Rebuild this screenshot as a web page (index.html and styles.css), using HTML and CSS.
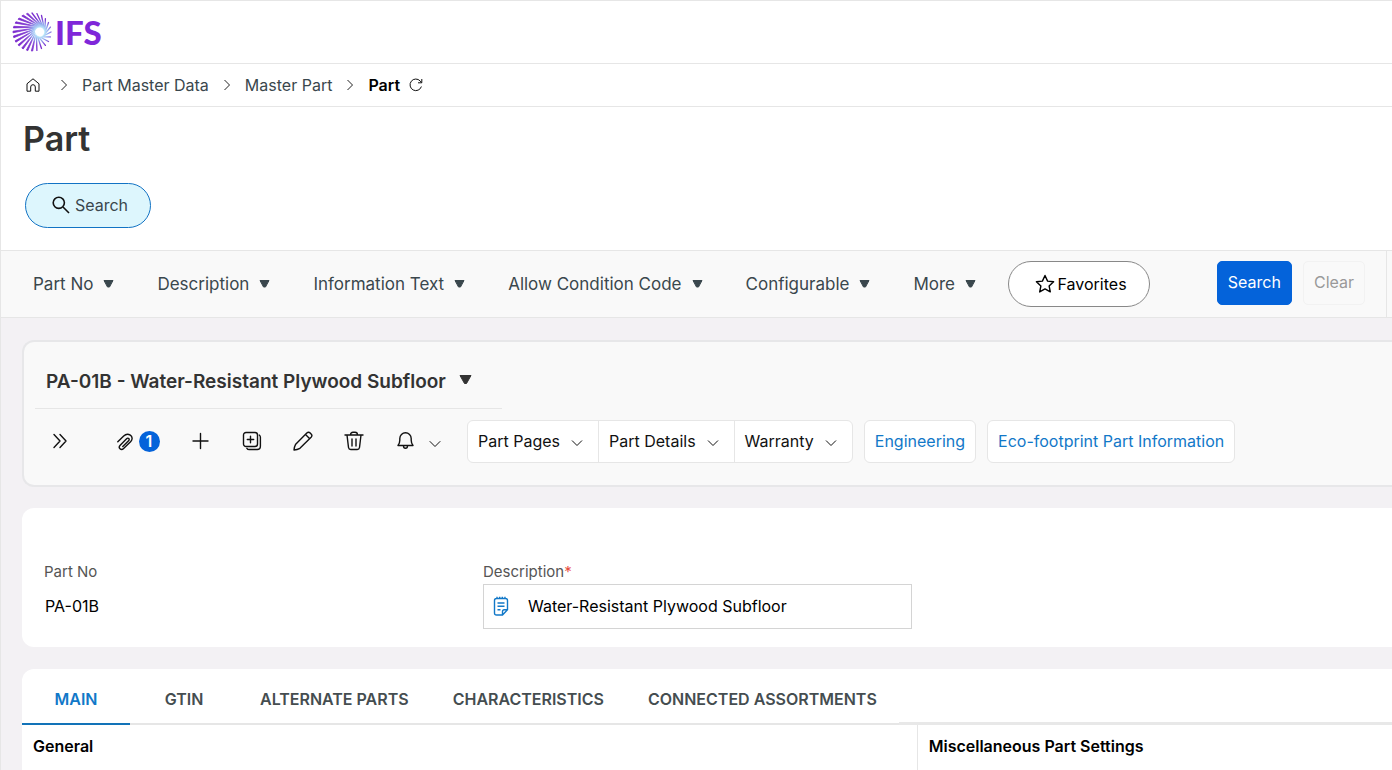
FILE: index.html
```html
<!DOCTYPE html>
<html lang="en">
<head>
    <meta charset="UTF-8">
    <meta name="viewport" content="width=device-width, initial-scale=1.0">
    <title>Part</title>
    <link rel="stylesheet" href="styles.css">
</head>
<body>
    <header class="topbar">
        <a class="logo" href="#">
            <svg width="42" height="42" viewBox="0 0 42 42" aria-hidden="true">
                <defs>
                    <radialGradient id="burst" gradientUnits="userSpaceOnUse" cx="29" cy="21" r="27">
                        <stop offset="0.15" stop-color="#c4f1fb"/>
                        <stop offset="0.3" stop-color="#8fa8ee"/>
                        <stop offset="0.5" stop-color="#8240d2"/>
                        <stop offset="1" stop-color="#7a26cc"/>
                    </radialGradient>
                    <radialGradient id="burstRight" gradientUnits="userSpaceOnUse" cx="29" cy="21" r="14">
                        <stop offset="0.3" stop-color="#c4f1fb"/>
                        <stop offset="0.6" stop-color="#8fa8ee"/>
                        <stop offset="1" stop-color="#7a30cf"/>
                    </radialGradient>
                </defs>
                <g fill="url(#burst)" stroke="url(#burst)" stroke-width="0.8" stroke-linejoin="round">
                    <path d="M20.3 40 21.7 40 24.7 23.5zM15.4 39.1 16.8 39.7 24.2 22.3zM10.8 37 12.2 38 24 21zM7 33.8 8.2 35 24.2 19.7zM4.1 29.8 4.9 31.2 24.7 18.5zM2.4 25.1 2.8 26.7 25.5 17.5zM2 20.2 2 21.8 26.5 16.7zM2.8 15.3 2.4 16.9 27.7 16.2zM4.9 10.8 4.1 12.2 29 16zM8.2 7 7 8.2 30.3 16.2zM12.2 4 10.8 5 31.5 16.7zM16.8 2.3 15.4 2.9 32.5 17.5z"/>
                </g>
                <g fill="none" stroke="url(#burstRight)" stroke-width="1.3" stroke-linecap="round">
                    <path d="M21 2 33.3 18.5M25.9 2.6 33.8 19.7M30.5 4.5 34 21M34.4 7.6 33.8 22.3M37.5 11.5 33.3 23.5M39.4 16.1 32.5 24.5M40 21 31.5 25.3M39.4 25.9 30.3 25.8M37.5 30.5 29 26M34.4 34.4 27.7 25.8M30.5 37.5 26.5 25.3M25.9 39.4 25.5 24.5"/>
                </g>
            </svg>
            <span>IFS</span>
        </a>
    </header>

    <nav class="breadcrumb" aria-label="Breadcrumb">
        <a class="home" href="#" aria-label="Home">
            <svg width="14" height="14" viewBox="0 0 14 14"><path d="M1 5.8 7 .8l6 5v7.4H9.3V9a2.3 2.3 0 0 0-4.6 0v4.2H1z"/></svg>
        </a>
        <svg class="sep" width="8" height="12" viewBox="0 0 8 12"><path d="M1.5 1 6.5 6l-5 5"/></svg>
        <a href="#">Part Master Data</a>
        <svg class="sep" width="8" height="12" viewBox="0 0 8 12"><path d="M1.5 1 6.5 6l-5 5"/></svg>
        <a href="#">Master Part</a>
        <svg class="sep" width="8" height="12" viewBox="0 0 8 12"><path d="M1.5 1 6.5 6l-5 5"/></svg>
        <strong>Part</strong>
        <button class="refresh" type="button" aria-label="Refresh">
            <svg width="14" height="14" viewBox="0 0 14 14"><path d="M12.4 8.5A5.8 5.8 0 1 1 11.2 3l1.3 1.5M12.8 1v3.8H9"/></svg>
        </button>
    </nav>

    <section class="page-title">
        <h1>Part</h1>
        <button class="pill pill-search" type="button">
            <svg width="18" height="18" viewBox="0 0 18 18"><circle cx="6.8" cy="6.8" r="5.6"/><path d="m11 11 6 6"/></svg>
            Search
        </button>
    </section>

    <section class="filters">
        <div class="filter-list">
            <button type="button">Part No <svg class="caret" width="11" height="8" viewBox="0 0 11 8"><path d="M1 .5h9L6.5 7h-2z"/></svg></button>
            <button type="button">Description <svg class="caret" width="11" height="8" viewBox="0 0 11 8"><path d="M1 .5h9L6.5 7h-2z"/></svg></button>
            <button type="button">Information Text <svg class="caret" width="11" height="8" viewBox="0 0 11 8"><path d="M1 .5h9L6.5 7h-2z"/></svg></button>
            <button type="button">Allow Condition Code <svg class="caret" width="11" height="8" viewBox="0 0 11 8"><path d="M1 .5h9L6.5 7h-2z"/></svg></button>
            <button type="button">Configurable <svg class="caret" width="11" height="8" viewBox="0 0 11 8"><path d="M1 .5h9L6.5 7h-2z"/></svg></button>
            <button type="button">More <svg class="caret" width="11" height="8" viewBox="0 0 11 8"><path d="M1 .5h9L6.5 7h-2z"/></svg></button>
        </div>
        <button class="pill pill-favorites" type="button">
            <svg width="20" height="20" viewBox="0 0 20 20"><path d="m10 1.500 2.600 5.600 6 .7-4.500 4.100 1.200 6-5.300-3-5.300 3 1.200-6L1.400 7.800l6-.7z"/></svg>
            Favorites
        </button>
        <div class="filter-actions">
            <button class="btn-search" type="button">Search</button>
            <button class="btn-clear" type="button" disabled>Clear</button>
        </div>
    </section>

    <main class="content">
        <section class="record">
            <button class="record-title" type="button">
                PA-01B - Water-Resistant Plywood Subfloor
                <svg class="caret" width="13" height="10" viewBox="0 0 13 10"><path d="M1 .5h11L7.500 8.500h-2z"/></svg>
            </button>
            <div class="toolbar">
                <button class="tool tool-expand" type="button" aria-label="Expand">
                    <svg width="16" height="16" viewBox="0 0 16 16"><path d="m2 1.500 6 6.500-6 6.500M8 1.500 14 8l-6 6.500"/></svg>
                </button>
                <button class="tool tool-attach" type="button" aria-label="Attachments">
                    <svg width="18" height="18" viewBox="0 0 18 18"><path d="M1.800 8.800 7.700 3c2-1.900 4.500-2.200 6.600-.8 2.200 1.500 2.400 4.300.5 6.200l-7.200 7.200c-1.100 1.100-2.700 1.100-3.600.2-1-1-.9-2.500.2-3.600l6.400-6.400c.8-.8 1.700-.8 2.200-.2.600.6.500 1.400-.2 2.100L6.800 13.400"/></svg>
                    <span class="badge">1</span>
                </button>
                <button class="tool" type="button" aria-label="New">
                    <svg width="18" height="18" viewBox="0 0 18 18"><path d="M8.500 1.500v15M1 9h15"/></svg>
                </button>
                <button class="tool" type="button" aria-label="Duplicate">
                    <svg width="20" height="20" viewBox="0 0 20 20"><rect x="1.500" y="1.500" width="14" height="14" rx="2.500"/><path d="M8.500 5.300v6.400M5.300 8.500h6.400M17.200 4c.8.500 1.200 1.300 1.200 2.300v9c0 2-1.300 3.200-3.200 3.200h-8c-1 0-1.800-.4-2.300-1.200"/></svg>
                </button>
                <button class="tool" type="button" aria-label="Edit">
                    <svg width="20" height="20" viewBox="0 0 20 20"><path d="M1 19c.2-2 .7-4 1.700-5.800L13.800 2.100c1-1 2.500-1 3.400-.1l.9.900c1 1 .9 2.400 0 3.400L6.900 17.300C5 18.300 3 18.800 1 19zM12.500 3.500l4 4"/></svg>
                </button>
                <button class="tool" type="button" aria-label="Delete">
                    <svg width="20" height="20" viewBox="0 0 20 20"><path d="M1 4h18M6.500 4c0-1.500 1-2.700 2.500-2.700h2c1.500 0 2.500 1.200 2.500 2.700M3 4l1.500 12.500c.2 1.300 1 2 2.200 2h6.600c1.200 0 2-.7 2.200-2L17 4M8 8v7M12 8v7"/></svg>
                </button>
                <button class="tool" type="button" aria-label="Notifications">
                    <svg width="20" height="20" viewBox="0 0 20 20"><path d="M3 14.500c1.300-1.600 1.800-3 1.800-5.200V7.500a5.700 5.700 0 0 1 11.400 0v1.800c0 2.200.5 3.600 1.800 5.200zM8.500 15c0 1.200.8 2.200 2 2.200s2-1 2-2.200"/></svg>
                </button>
                <button class="tool tool-more" type="button" aria-label="Notification options">
                    <svg width="12" height="8" viewBox="0 0 12 8"><path d="m1 1.500 5 5 5-5"/></svg>
                </button>
                <div class="menu-group">
                    <button type="button">Part Pages <svg width="12" height="8" viewBox="0 0 12 8"><path d="m1 1.500 5 5 5-5"/></svg></button>
                    <button type="button">Part Details <svg width="12" height="8" viewBox="0 0 12 8"><path d="m1 1.500 5 5 5-5"/></svg></button>
                    <button type="button">Warranty <svg width="12" height="8" viewBox="0 0 12 8"><path d="m1 1.500 5 5 5-5"/></svg></button>
                </div>
                <a class="link-btn" href="#">Engineering</a>
                <a class="link-btn" href="#">Eco-footprint Part Information</a>
            </div>
        </section>

        <form class="fields" onsubmit="return false;">
            <div class="field">
                <label for="partNo">Part No</label>
                <output id="partNo">PA-01B</output>
            </div>
            <div class="field">
                <label for="description">Description<span class="required">*</span></label>
                <div class="input-box">
                    <svg width="16" height="20" viewBox="0 0 16 20"><path d="M9.500 19H3.500C2.200 19 1.500 18.300 1.500 17V4.500c0-1.200.7-2 2-2h9c1.300 0 2 .8 2 2v9.300zM9.500 19v-3.500c0-1.200.7-1.800 1.800-1.800h3.200M4 .8v2M6.700.8v2M9.300.8v2M12 .8v2M4.500 7h7M4.500 10.300h7M4.500 13.700h3"/></svg>
                    <input type="text" id="description" name="description" value="Water-Resistant Plywood Subfloor" required>
                </div>
            </div>
        </form>

        <section class="details">
            <div class="tabs" role="tablist">
                <button class="tab active" type="button" role="tab" aria-selected="true">MAIN</button>
                <button class="tab" type="button" role="tab">GTIN</button>
                <button class="tab" type="button" role="tab">ALTERNATE PARTS</button>
                <button class="tab" type="button" role="tab">CHARACTERISTICS</button>
                <button class="tab" type="button" role="tab">CONNECTED ASSORTMENTS</button>
                <span class="tabs-rest"></span>
            </div>
            <div class="panels">
                <div class="panel"><h2>General</h2></div>
                <div class="panel"><h2>Miscellaneous Part Settings</h2></div>
            </div>
        </section>
    </main>
</body>
</html>
```
FILE: styles.css
```css
* {
    box-sizing: border-box;
}
html {
    height: 100%;
}
body {
    display: flex;
    flex-direction: column;
    min-height: 100%;
    margin: 0;
    border-top: 1px solid #e6e6e6;
    border-left: 1px solid #e6e6e6;
    background-color: #fff;
    color: #3a474d;
    font-family: Inter, "Liberation Sans", sans-serif;
    font-size: 16px;
    line-height: 20px;
}
h1,
h2 {
    margin: 0;
}
a {
    color: inherit;
    text-decoration: none;
}
button {
    display: flex;
    align-items: center;
    margin: 0;
    padding: 0;
    border: none;
    background: none;
    color: inherit;
    font: inherit;
    white-space: nowrap;
    cursor: pointer;
}
svg {
    flex: none;
    fill: none;
    stroke: currentColor;
}

/* header */
.topbar {
    height: 63px;
    padding: 9px 10px;
    border-bottom: 1px solid #e6e6e6;
}
.logo {
    display: flex;
    align-items: center;
    gap: 2px;
    color: #7f27d9;
    font-family: Lato, sans-serif;
    font-size: 33px;
    font-weight: 900;
    line-height: 44px;
}
.logo svg {
    stroke: none;
}
.breadcrumb {
    display: flex;
    align-items: center;
    height: 43px;
    padding: 0 25px;
    border-bottom: 1px solid #e6e6e6;
}
.breadcrumb .sep {
    margin: 0 14px;
    color: #222;
}
.breadcrumb .home {
    display: flex;
    margin-right: 6px;
    color: #111;
}
.breadcrumb strong {
    color: #000;
    font-weight: 600;
}
.refresh {
    margin-left: 9px;
    color: #111;
}

/* title */
.page-title {
    padding: 10px 22px 22px;
}
.page-title h1 {
    color: #333;
    font-size: 34px;
    font-weight: 600;
    line-height: 44px;
}
.pill {
    justify-content: center;
    border: 1px solid #888;
    border-radius: 23px;
    background-color: #fff;
}
.pill-search {
    gap: 5px;
    width: 126px;
    height: 45px;
    margin: 22px 2px 0;
    padding: 0 0 2px 4px;
    border-color: #1273c4;
    background-color: #ddf6fd;
}
.pill-search svg {
    color: #111;
    stroke-width: 1.6;
}

/* filters */
.filters {
    display: flex;
    align-items: center;
    height: 68px;
    padding: 0 5px 0 32px;
    border: solid #e6e6e6;
    border-width: 1px 0;
    background-color: #f9f9f9;
}
.filter-list {
    display: flex;
    gap: 43px;
    font-size: 17px;
}
.filter-list button {
    gap: 10px;
}
.caret {
    fill: currentColor;
    stroke-linejoin: round;
}
.pill-favorites {
    gap: 3px;
    width: 142px;
    height: 46px;
    margin-left: 32px;
    padding-left: 3px;
    color: #000;
}
.pill-favorites svg {
    stroke-width: 1.4;
    stroke-linejoin: round;
}
.filter-actions {
    display: flex;
    align-items: center;
    align-self: stretch;
    gap: 11px;
    margin-left: auto;
    padding: 0 21px 2px 0;
    border-right: 1px solid #e6e6e6;
}
.filter-actions button {
    height: 44px;
    padding: 0 10px 2px;
    border: 1px solid #0463da;
    border-radius: 5px;
}
.filter-actions .btn-search {
    background-color: #0463da;
    color: #fff;
}
.filter-actions .btn-clear {
    border-color: #f2f2f2;
    color: #999;
}

/* content */
.content {
    display: flex;
    flex: 1;
    flex-direction: column;
    gap: 21px;
    padding: 22px 0 0 21px;
    background-color: #f3f1f4;
}
.record {
    padding: 27px 0 22px 11px;
    border: 2px solid #e7e7e9;
    border-right: none;
    border-radius: 12px 0 0 12px;
    background-color: #f9f9f9;
}
.record-title {
    gap: 13px;
    width: 467px;
    padding: 0 11px 13px;
    border-bottom: 1px solid #e6e6e6;
    color: #333;
    font-size: 19px;
    font-weight: 600;
    line-height: 26px;
}
.record-title .caret {
    margin-bottom: 4px;
}
.toolbar {
    display: flex;
    align-items: center;
    margin-top: 11px;
    color: #111;
}
.tool {
    justify-content: center;
    width: 51px;
    height: 42px;
    padding-bottom: 2px;
}
.tool svg {
    stroke-width: 1.4;
    stroke-linecap: round;
    stroke-linejoin: round;
}
.tool-expand {
    width: 50px;
}
.tool-attach {
    gap: 5px;
    width: 90px;
    padding: 0 0 0 15px;
}
.badge {
    width: 21px;
    border-radius: 11px;
    background-color: #0463da;
    color: #fff;
    font-weight: 600;
    line-height: 21px;
}
.tool-more {
    width: 10px;
    margin-right: 27px;
    padding: 4px 0 0;
}
.tool-more svg,
.menu-group svg {
    stroke-width: 1;
}
.menu-group {
    display: flex;
    margin-right: 11px;
    border: 1px solid #e6e6e6;
    border-radius: 6px;
    background-color: #fff;
}
.menu-group button {
    gap: 11px;
    height: 41px;
    padding: 0 15px 2px 10px;
}
.menu-group button + button {
    border-left: 1px solid #e6e6e6;
}
.menu-group svg {
    margin-top: 5px;
}
.link-btn {
    margin-right: 11px;
    padding: 10px 10px 11px;
    border: 1px solid #e6e6e6;
    border-radius: 6px;
    background-color: #fff;
    color: #1278c8;
}

/* fields */
.fields {
    display: grid;
    grid-template-columns: repeat(3, 1fr);
    gap: 10px;
    padding: 54px 41px 18px 22px;
    border-radius: 12px 0 0 12px;
    background-color: #fff;
}
.field {
    display: flex;
    flex-direction: column;
    gap: 2px;
}
.field label {
    color: #555;
    font-size: 15px;
}
.field output {
    padding: 12px 1px;
    color: #000;
}
.required {
    color: #e8503f;
}
.input-box {
    display: flex;
    align-items: center;
    gap: 19px;
    height: 45px;
    padding: 0 9px 2px;
    border: 1px solid #d4d4d4;
}
.input-box svg {
    color: #1278c8;
    stroke-width: 1.4;
}
.input-box input {
    flex: 1;
    min-width: 0;
    padding: 0;
    border: none;
    outline: none;
    background: none;
    color: #000;
    font: inherit;
}

/* tabs */
.details {
    display: flex;
    flex: 1;
    flex-direction: column;
    margin-top: 1px;
    border-radius: 12px 0 0 0;
    background-color: #fff;
}
.tabs {
    display: flex;
    height: 56px;
}
.tab {
    justify-content: center;
    min-width: 108px;
    padding: 6px 22px 0;
    border-bottom: 2px solid #e6e6e6;
    color: #454d50;
    font-weight: 600;
}
.tab.active {
    border-color: #1273b8;
    color: #1278c8;
}
.tabs-rest {
    flex: 1;
    border-bottom: 3px solid #e8e8e8;
}
.panels {
    display: grid;
    flex: 1;
    grid-template-columns: 64fr 34fr;
}
.panel {
    padding: 11px;
}
.panel + .panel {
    border-left: 1px solid #e6e6e6;
}
.panel h2 {
    color: #000;
    font-size: 16px;
    font-weight: 600;
    line-height: 20px;
}
```
